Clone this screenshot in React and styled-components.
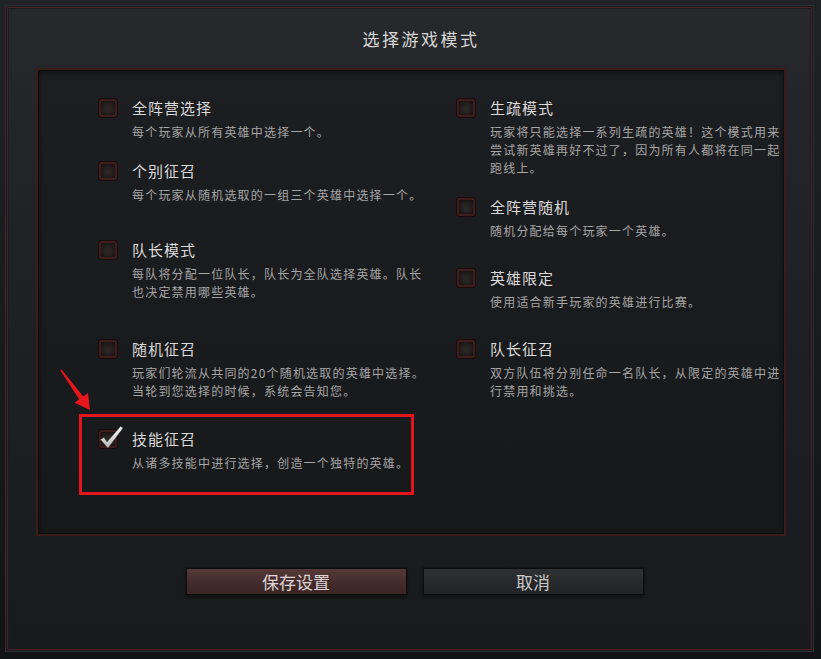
import React from "react";
import styled, { createGlobalStyle } from "styled-components";

const GlobalStyle = createGlobalStyle`
  html, body {
    margin: 0;
    padding: 0;
    background: #141517;
  }
  body {
    font-family: "Noto Sans CJK SC", "Noto Sans", sans-serif;
  }
`;

const Page = styled.div`
  width: 821px;
  height: 659px;
  padding: 5px 7px 7px 5px;
  box-sizing: border-box;
  background: linear-gradient(#202225, #121314);
`;

const Dialog = styled.div`
  height: 100%;
  box-sizing: border-box;
  border: 1px solid #2c2d30;
  box-shadow: inset 0 0 0 1px #1a1b1d, inset 0 0 0 2px #4a2121,
    inset 0 0 0 3px #1b1c1f;
  background: linear-gradient(#26282c 0%, #1f2124 40%, #191a1d 100%);
  padding: 0 27px 0 30px;
  display: flex;
  flex-direction: column;
`;

const Title = styled.h1`
  margin: 0;
  height: 62px;
  display: flex;
  align-items: center;
  justify-content: center;
  padding: 3px 0 0 20px;
  box-sizing: border-box;
  font-size: 17px;
  font-weight: 400;
  letter-spacing: 2.5px;
  color: #d6d6d6;
`;

const Panel = styled.div`
  height: 468px;
  box-sizing: border-box;
  border: 2px solid #3b1c1c;
  box-shadow: inset 0 0 0 1px #0e0e0f, inset 0 2px 6px rgba(0, 0, 0, 0.6);
  background: linear-gradient(#1d1e21, #17181a);
  padding: 28px 0 0 60px;
  display: grid;
  grid-template-columns: 358px 1fr;
  align-items: start;
`;

const Column = styled.div`
  display: flex;
  flex-direction: column;
`;

const Item = styled.div`
  position: relative;
  display: flex;
  gap: 14px;
  margin-top: ${(p) => p.$mt || 0}px;
`;

const Highlight = styled.div`
  position: absolute;
  left: -19px;
  top: -15px;
  width: 335px;
  height: 81px;
  box-sizing: border-box;
  border: 3px solid #e3141a;
  pointer-events: none;
`;

const Arrow = styled.svg`
  position: absolute;
  left: -40px;
  top: -64px;
  width: 36px;
  height: 48px;
`;

const Box = styled.div`
  position: relative;
  flex: none;
  width: 20px;
  height: 20px;
  box-sizing: border-box;
  border-radius: 3px;
  border: 1px solid #1a0c0c;
  background: radial-gradient(circle at 50% 60%, #2c2929 0%, #231d1d 60%, #1c1313 100%);
  box-shadow: inset 0 0 0 2px #3f1d1d, inset 0 0 4px 2px rgba(0, 0, 0, 0.5);
`;

const Tick = styled.svg`
  position: absolute;
  left: 0px;
  top: -5px;
  width: 25px;
  height: 24px;
`;

const Text = styled.div`
  display: flex;
  flex-direction: column;
`;

const Name = styled.div`
  font-size: 15px;
  line-height: 20px;
  letter-spacing: 1px;
  color: #dadada;
`;

const Desc = styled.div`
  margin-top: 5px;
  font-size: 12px;
  line-height: 18px;
  letter-spacing: 1.2px;
  color: #a6a6a6;
  white-space: nowrap;
`;

const Buttons = styled.div`
  display: flex;
  justify-content: center;
  gap: 16px;
  margin-top: 32px;
  padding-left: 7px;
`;

const Button = styled.button`
  width: 221px;
  height: 27px;
  padding: 0;
  border: 1px solid #0c0c0c;
  box-shadow: 0 0 0 1px #151515, 0 2px 3px rgba(0, 0, 0, 0.6);
  font-family: inherit;
  font-size: 17px;
  line-height: 25px;
  color: ${(p) => (p.$primary ? "#ddd4d4" : "#c9c9c9")};
  background: ${(p) =>
    p.$primary
      ? "linear-gradient(#553838, #452d2d 50%, #3a2424)"
      : "linear-gradient(#303134, #28292b 50%, #222325)"};
`;

const left = [
  { title: "全阵营选择", lines: ["每个玩家从所有英雄中选择一个。"] },
  { title: "个别征召", lines: ["每个玩家从随机选取的一组三个英雄中选择一个。"], mt: 20 },
  {
    title: "队长模式",
    lines: ["每队将分配一位队长，队长为全队选择英雄。队长", "也决定禁用哪些英雄。"],
    mt: 36,
  },
  {
    title: "随机征召",
    lines: ["玩家们轮流从共同的20个随机选取的英雄中选择。", "当轮到您选择的时候，系统会告知您。"],
    mt: 38,
  },
  {
    title: "技能征召",
    lines: ["从诸多技能中进行选择，创造一个独特的英雄。"],
    mt: 29,
    checked: true,
    highlight: true,
  },
];

const right = [
  {
    title: "生疏模式",
    lines: [
      "玩家将只能选择一系列生疏的英雄！这个模式用来",
      "尝试新英雄再好不过了，因为所有人都将在同一起",
      "跑线上。",
    ],
  },
  { title: "全阵营随机", lines: ["随机分配给每个玩家一个英雄。"], mt: 20 },
  { title: "英雄限定", lines: ["使用适合新手玩家的英雄进行比赛。"], mt: 28 },
  {
    title: "队长征召",
    lines: ["双方队伍将分别任命一名队长，从限定的英雄中进", "行禁用和挑选。"],
    mt: 28,
  },
];

const Mode = ({ title, lines, mt, checked, highlight }) => (
  <Item $mt={mt}>
    {highlight && (
      <>
        <Highlight />
        <Arrow viewBox="0 0 36 48">
          <polygon
            points="3.6,4.6 25.2,31.4 30,28 32,45 16.5,37.8 21.2,34.3 2.4,5.4"
            fill="#e8161c"
          />
        </Arrow>
      </>
    )}
    <Box>
      {checked && (
        <Tick viewBox="0 0 25 24">
          <defs>
            <linearGradient id="tickFill" x1="0" y1="0" x2="0" y2="1">
              <stop offset="0" stopColor="#ffffff" />
              <stop offset="1" stopColor="#b8b8b8" />
            </linearGradient>
          </defs>
          <path
            d="M1.5 14.5 L5 12.5 L8 17 L21.5 1.5 L24 3 L9 23 Z"
            fill="url(#tickFill)"
            stroke="#555"
            strokeWidth="0.5"
          />
        </Tick>
      )}
    </Box>
    <Text>
      <Name>{title}</Name>
      <Desc>
        {lines.map((line, i) => (
          <div key={i}>{line}</div>
        ))}
      </Desc>
    </Text>
  </Item>
);

export default function App() {
  return (
    <>
      <GlobalStyle />
      <Page>
        <Dialog>
          <Title>选择游戏模式</Title>
          <Panel>
            <Column>
              {left.map((m) => (
                <Mode key={m.title} {...m} />
              ))}
            </Column>
            <Column>
              {right.map((m) => (
                <Mode key={m.title} {...m} />
              ))}
            </Column>
          </Panel>
          <Buttons>
            <Button $primary>保存设置</Button>
            <Button>取消</Button>
          </Buttons>
        </Dialog>
      </Page>
    </>
  );
}
